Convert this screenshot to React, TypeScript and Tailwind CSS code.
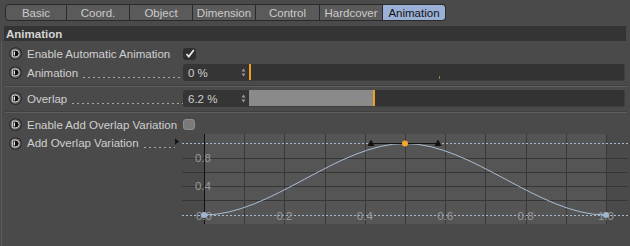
const tabs = ["Basic", "Coord.", "Object", "Dimension", "Control", "Hardcover", "Animation"];
const tabWidths = [62, 63, 63, 63, 64, 63, 63];

function AnimIcon() {
  return (
    <svg width="13" height="13" viewBox="0 0 13 13" className="shrink-0">
      <circle cx="6.5" cy="6.5" r="5.8" fill="#707070" stroke="#262626" strokeWidth="1.1" />
      <path d="M3.6 3.2 H6.8 A3.3 3.3 0 0 1 6.8 9.8 H3.6 Z" fill="#0e0e0e" stroke="#e2e2e2" strokeWidth="0.9" />
      <rect x="4.7" y="4.5" width="1.3" height="4" fill="#e6e6e6" />
    </svg>
  );
}

function Leader() {
  return (
    <div className="flex-1 flex items-end gap-[3px] overflow-hidden h-[10px] pl-[5px] pr-[7px]">
      {Array.from({ length: 40 }, (_, i) => (
        <div key={i} className="w-[2px] h-px shrink-0 bg-[#a8a8a8]" />
      ))}
    </div>
  );
}

function Label({ text, dots, width = 181 }: { text: string; dots?: boolean; width?: number }) {
  return (
    <div className="flex items-center pl-[7px] shrink-0" style={{ width }}>
      <AnimIcon />
      <span className="ml-[5px] text-[#d0d0d0] whitespace-nowrap">{text}</span>
      {dots ? <Leader /> : null}
    </div>
  );
}

function Spinner() {
  return (
    <svg width="5" height="9" viewBox="0 0 5 9" className="shrink-0">
      <path d="M2.5 0.5 L4.5 3.5 H0.5 Z" fill="#9a9a9a" />
      <path d="M2.5 8.5 L4.5 5.5 H0.5 Z" fill="#9a9a9a" />
    </svg>
  );
}

function SliderRow({ label, value, fill, tick }: { label: string; value: string; fill: number; tick: number }) {
  return (
    <div className="flex items-center h-[19px]">
      <Label text={label} dots />
      <div className="flex items-center justify-between w-[66px] h-[17px] bg-[#353535] rounded-l-[3px] pl-[5px] pr-[3px] text-[#cfcfcf]">
        <span>{value}</span>
        <Spinner />
      </div>
      <div className="relative flex w-[376px] h-[17px] bg-[#333333] rounded-r-[2px] border-r border-b border-[#3e3e3e]">
        <div className="h-full bg-[#8a8a8a]" style={{ width: fill }} />
        <div className="w-[2px] h-full bg-[#f0a020]" />
        <div className="absolute bottom-[1px] w-px h-[3px] bg-[#a08040]" style={{ left: tick }} />
      </div>
    </div>
  );
}

function Separator() {
  return (
    <div className="flex flex-col justify-center h-[7px] mx-[3px]">
      <div className="h-px bg-[#404040]" />
      <div className="h-px bg-[#5e5e5e]" />
    </div>
  );
}

function Graph() {
  const xs = Array.from({ length: 11 }, (_, i) => 202 + i * 40.2);
  const hs = [159, 173, 187, 201];
  return (
    <svg width="457" height="100" viewBox="173 134 457 100" className="shrink-0">
      <rect x="202" y="135" width="402" height="90" fill="#555555" />
      {hs.map((y) => (
        <line key={y} x1="180" y1={y + 0.5} x2="626" y2={y + 0.5} stroke="#363636" strokeWidth="1" />
      ))}
      {xs.map((x, i) => (
        <line
          key={i}
          x1={Math.round(x) + 0.5}
          y1="135"
          x2={Math.round(x) + 0.5}
          y2="225"
          stroke={i === 0 ? "#111111" : "#383838"}
          strokeWidth="1"
        />
      ))}
      <line x1="180" y1="144.5" x2="628" y2="144.5" stroke="#a7b9cc" strokeWidth="1" strokeDasharray="2 2" />
      <line x1="180" y1="216.5" x2="628" y2="216.5" stroke="#a7b9cc" strokeWidth="1" strokeDasharray="2 2" />
      {[
        ["0.8", 159],
        ["0.4", 187],
      ].map(([t, y]) => (
        <text key={t} x="201" y={Number(y) + 4} textAnchor="middle" fontSize="11.5" fill="#9a9a9a" fontFamily="Liberation Sans, sans-serif">
          {t}
        </text>
      ))}
      {["0.0", "0.2", "0.4", "0.6", "0.8", "1.0"].map((t, i) => (
        <text key={t} x={202 + i * 80.4} y="220.5" textAnchor="middle" fontSize="11.5" fill="#9a9a9a" fontFamily="Liberation Sans, sans-serif">
          {t}
        </text>
      ))}
      <path d="M202 216 C269 216 336 144.5 403 144.5 C470 144.5 537 216 604 216" fill="none" stroke="#a9bed3" strokeWidth="1" />
      <line x1="369" y1="144.5" x2="436" y2="144.5" stroke="#111111" strokeWidth="1" />
      <path d="M369 140.5 L372.5 147 H365.5 Z" fill="#111111" />
      <path d="M436 140.5 L439.5 147 H432.5 Z" fill="#111111" />
      <circle cx="403" cy="144.5" r="3" fill="#f4a92a" />
      <circle cx="202" cy="216" r="3" fill="#9fb6cf" />
      <circle cx="604" cy="216" r="3" fill="#9fb6cf" />
      <path d="M173 139.5 L177 142.5 L173 145.5 Z" fill="#111111" />
    </svg>
  );
}

export default function App() {
  return (
    <div className="w-[630px] h-[246px] overflow-hidden bg-[#4a4a4a] font-['Liberation_Sans',Arial,sans-serif] text-[11.5px] leading-[14px]">
      <div className="flex pl-[5px] pt-[4px] h-[22px]">
        {tabs.map((t, i) => {
          const active = i === tabs.length - 1;
          return (
            <div
              key={t}
              style={{ width: tabWidths[i] }}
              className={
                "flex items-center justify-center h-[17px] border-y border-r border-[#2a2a2a] " +
                (i === 0 ? "border-l rounded-l-[4px] " : "") +
                (active ? "rounded-r-[4px] bg-[#9ab0d6] text-[#141414]" : "bg-[#5a5a5a] text-[#cbcbcb]")
              }
            >
              {t}
            </div>
          );
        })}
      </div>
      <div className="mx-[4px] mt-[4px] h-[15px] bg-[#343434] flex items-center pl-[2px] font-bold text-[#d4d4d4]">
        Animation
      </div>
      <div className="ml-px border-l border-[#5c5c5c] h-[205px] pt-[3px]">
        <div className="flex items-center h-[19px]">
          <Label text="Enable Automatic Animation" />
          <div className="flex items-center justify-center w-[13px] h-[12px] rounded-[3px] bg-[#2e2e2e]">
            <svg width="10" height="9" viewBox="0 0 10 9">
              <path d="M1.5 5 L3.8 7.5 L8.8 1" fill="none" stroke="#e8e8e8" strokeWidth="1.8" />
            </svg>
          </div>
        </div>
        <SliderRow label="Animation" value="0 %" fill={0} tick={190} />
        <Separator />
        <SliderRow label="Overlap" value="6.2 %" fill={124} tick={109} />
        <Separator />
        <div className="flex items-center h-[19px]">
          <Label text="Enable Add Overlap Variation" />
          <div className="w-[12px] h-[11px] rounded-[3px] bg-[#7a7a7a] border border-[#8e8e8e]" />
        </div>
        <div className="flex items-start h-[100px] -mt-px">
          <div className="flex items-center h-[20px] w-[173px] shrink-0">
            <Label text="Add Overlap Variation" dots width={173} />
          </div>
          <Graph />
        </div>
      </div>
    </div>
  );
}
